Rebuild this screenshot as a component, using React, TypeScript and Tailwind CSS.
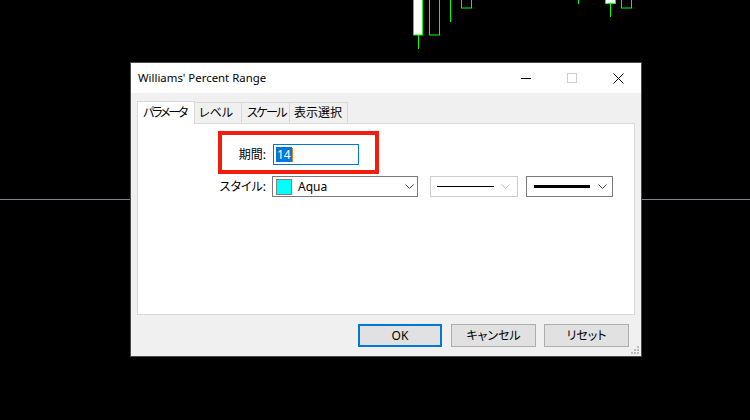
import React from "react";

const jp = { fontFamily: '"Noto Sans", "Noto Sans CJK JP", sans-serif' };

function Chevron({ color = "#3c3c3c" }: { color?: string }) {
  return (
    <svg width="9" height="6" viewBox="0 0 9 6" className="shrink-0">
      <polyline points="0.5,0.5 4.5,4.5 8.5,0.5" fill="none" stroke={color} strokeWidth="1" />
    </svg>
  );
}

function ChartBackground() {
  // candles + zero line behind the dialog
  return (
    <svg width="750" height="420" className="absolute inset-0">
      <line x1="0" y1="199.5" x2="750" y2="199.5" stroke="#7c8490" strokeWidth="1" />
      <rect x="413.5" y="-2" width="9" height="37" fill="#ffffff" stroke="#00ff00" strokeWidth="1" />
      <line x1="418.5" y1="35" x2="418.5" y2="49" stroke="#00ff00" strokeWidth="1" />
      <rect x="429.5" y="-2" width="10" height="37" fill="none" stroke="#00ff00" strokeWidth="1" />
      <line x1="450.5" y1="0" x2="450.5" y2="22" stroke="#00ff00" strokeWidth="1" />
      <rect x="461.5" y="-2" width="10" height="10" fill="none" stroke="#00ff00" strokeWidth="1" />
      <line x1="578.5" y1="0" x2="578.5" y2="4" stroke="#00ff00" strokeWidth="1" />
      <rect x="605.5" y="-2" width="10" height="5.5" fill="#ffffff" stroke="#00ff00" strokeWidth="1" />
      <line x1="610.5" y1="3.5" x2="610.5" y2="17" stroke="#00ff00" strokeWidth="1" />
      <rect x="621.5" y="-2" width="10" height="10" fill="none" stroke="#00ff00" strokeWidth="1" />
    </svg>
  );
}

export default function App() {
  const tabs = [
    { label: "レベル", cls: "w-[47px] pl-[4px]" },
    { label: "スケール", cls: "w-[48px] pl-[5px] tracking-[-1.5px]" },
    { label: "表示選択", cls: "w-[58px] pl-[4px]" },
  ];

  return (
    <div className="relative w-[750px] h-[420px] bg-black overflow-hidden [font-feature-settings:'palt']" style={jp}>
      <ChartBackground />

      {/* dialog window */}
      <div className="absolute left-[130px] top-[62px] w-[512px] h-[295px] bg-[#f0f0f0] border border-[#4a4a4a] flex flex-col">
        {/* title bar */}
        <div className="h-[30px] bg-white flex items-center shrink-0">
          <span className="pl-[7px] text-[11.4px] text-black leading-none whitespace-nowrap">Williams' Percent Range</span>
          <div className="ml-auto flex items-center h-full">
            <div className="w-[46px] h-full flex items-center justify-center">
              <div className="w-[10px] h-px bg-black" />
            </div>
            <div className="w-[46px] h-full flex items-center justify-center">
              <div className="w-[10px] h-[10px] border border-[#cccccc]" />
            </div>
            <div className="w-[46px] h-full flex items-center justify-center">
              <svg width="11" height="11" viewBox="0 0 11 11">
                <path d="M0.5 0.5 L10.5 10.5 M10.5 0.5 L0.5 10.5" stroke="#000" strokeWidth="1" />
              </svg>
            </div>
          </div>
        </div>

        <div className="flex-1 flex flex-col px-[6px] pt-[8px]">
          {/* tabs */}
          <div className="flex items-end h-[22px] relative z-10">
            <div className="w-[58px] h-[23px] -mb-px bg-white border border-b-0 border-[#d9d9d9] flex items-center pl-[5px] text-[12px] text-black whitespace-nowrap tracking-[-2.2px]">
              パラメータ
            </div>
            {tabs.map((t) => (
              <div
                key={t.label}
                className={`${t.cls} h-[21px] bg-[#f0f0f0] border border-l-0 border-b-0 border-[#d9d9d9] flex items-center text-[12px] text-black whitespace-nowrap`}
              >
                {t.label}
              </div>
            ))}
          </div>

          {/* panel */}
          <div className="relative h-[192px] w-[498px] bg-white border border-[#d9d9d9]">
            <div className="flex flex-col gap-[11px] pt-[20px]">
              <div className="flex items-center gap-[7px]">
                <div className="w-[128px] text-right text-[12px] text-black">期間:</div>
                <div className="w-[86px] h-[21px] border border-[#0078d7] flex items-center pl-[2px]">
                  <span className="bg-[#0078d7] text-white text-[12px] leading-[15px] px-px">14</span>
                  <span className="w-px h-[14px] bg-[#e87c1e]" />
                </div>
              </div>
              <div className="flex items-center">
                <div className="w-[128px] text-right text-[12px] text-black">スタイル:</div>
                <div className="ml-[6px] w-[146px] h-[21px] border border-[#7a7a7a] flex items-center pl-[3px] pr-[3px]">
                  <div className="w-[16px] h-[16px] bg-[#00ffff] border border-[#808080]" />
                  <span className="ml-[6px] text-[12px] text-black">Aqua</span>
                  <div className="ml-auto"><Chevron /></div>
                </div>
                <div className="ml-[12px] w-[88px] h-[21px] border border-[#cccccc] flex items-center pl-[6px] pr-[7px]">
                  <div className="w-[57px] h-px bg-black" />
                  <div className="ml-auto"><Chevron color="#bfbfbf" /></div>
                </div>
                <div className="ml-[8px] w-[87px] h-[21px] border border-[#7a7a7a] flex items-center pl-[7px] pr-[5px]">
                  <div className="w-[56px] h-[3px] bg-black" />
                  <div className="ml-auto"><Chevron /></div>
                </div>
              </div>
            </div>

            {/* highlight box */}
            <div className="absolute left-[80px] top-[7px] w-[161px] h-[43px] border-4 border-[#f21d0d]" />
          </div>

          {/* buttons */}
          <div className="flex justify-end gap-[8px] pr-[6px] mt-[9px]">
            <button className="w-[84px] h-[23px] bg-[#e1e1e1] border-2 border-[#0078d7] text-[12px] text-black">OK</button>
            <button className="w-[85px] h-[23px] bg-[#e1e1e1] border border-[#adadad] text-[12px] text-black ml-px">キャンセル</button>
            <button className="w-[85px] h-[23px] bg-[#e1e1e1] border border-[#adadad] text-[12px] text-black">リセット</button>
          </div>
        </div>

        {/* size grip */}
        <svg width="9" height="9" viewBox="0 0 9 9" className="absolute right-[1px] bottom-[1px]">
          {[
            [6, 0], [3, 3], [6, 3], [0, 6], [3, 6], [6, 6],
          ].map(([x, y]) => (
            <rect key={`${x}-${y}`} x={x} y={y} width="2" height="2" fill="#bcbcbc" />
          ))}
        </svg>
      </div>
    </div>
  );
}
